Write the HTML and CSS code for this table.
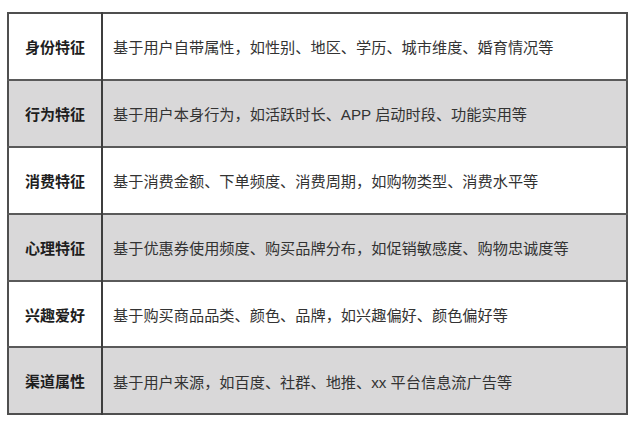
FILE: index.html
```html
<!DOCTYPE html>
<html lang="zh-CN">
<head>
<meta charset="utf-8">
<link rel="stylesheet" href="styles.css">
</head>
<body>
<table class="features">
  <tr class="row">
    <th class="label">身份特征</th>
    <td class="desc">基于用户自带属性，如性别、地区、学历、城市维度、婚育情况等</td>
  </tr>
  <tr class="row alt">
    <th class="label">行为特征</th>
    <td class="desc">基于用户本身行为，如活跃时长、APP 启动时段、功能实用等</td>
  </tr>
  <tr class="row">
    <th class="label">消费特征</th>
    <td class="desc">基于消费金额、下单频度、消费周期，如购物类型、消费水平等</td>
  </tr>
  <tr class="row alt">
    <th class="label">心理特征</th>
    <td class="desc">基于优惠券使用频度、购买品牌分布，如促销敏感度、购物忠诚度等</td>
  </tr>
  <tr class="row">
    <th class="label">兴趣爱好</th>
    <td class="desc">基于购买商品品类、颜色、品牌，如兴趣偏好、颜色偏好等</td>
  </tr>
  <tr class="row alt">
    <th class="label">渠道属性</th>
    <td class="desc">基于用户来源，如百度、社群、地推、xx 平台信息流广告等</td>
  </tr>
</table>
</body>
</html>
```

FILE: styles.css
```css
html, body {
  margin: 0;
  padding: 0;
  background: #ffffff;
}

body {
  padding: 12px 0 0 7px;
  font-family: "Noto Sans CJK SC", "Microsoft YaHei", sans-serif;
  color: #2a2a2a;
}

.features {
  border-collapse: collapse;
  width: 621px;
  border: 2px solid #4f4f4f;
}

.row {
  height: 66.9px;
}

.row.alt {
  background: #d9d8d9;
}

.row + .row {
  border-top: 2px solid #5a5a5a;
}

.label {
  width: 92px;
  padding: 0;
  text-align: center;
  font-size: 15px;
  font-weight: bold;
  color: #1e1e1e;
  border-right: 2px solid #3e3e3e;
}

.desc {
  padding: 0 0 0 10px;
  text-align: left;
  font-family: "Liberation Sans", "Noto Sans CJK SC", sans-serif;
  font-size: 15.2px;
  color: #333333;
  font-weight: normal;
}
```
